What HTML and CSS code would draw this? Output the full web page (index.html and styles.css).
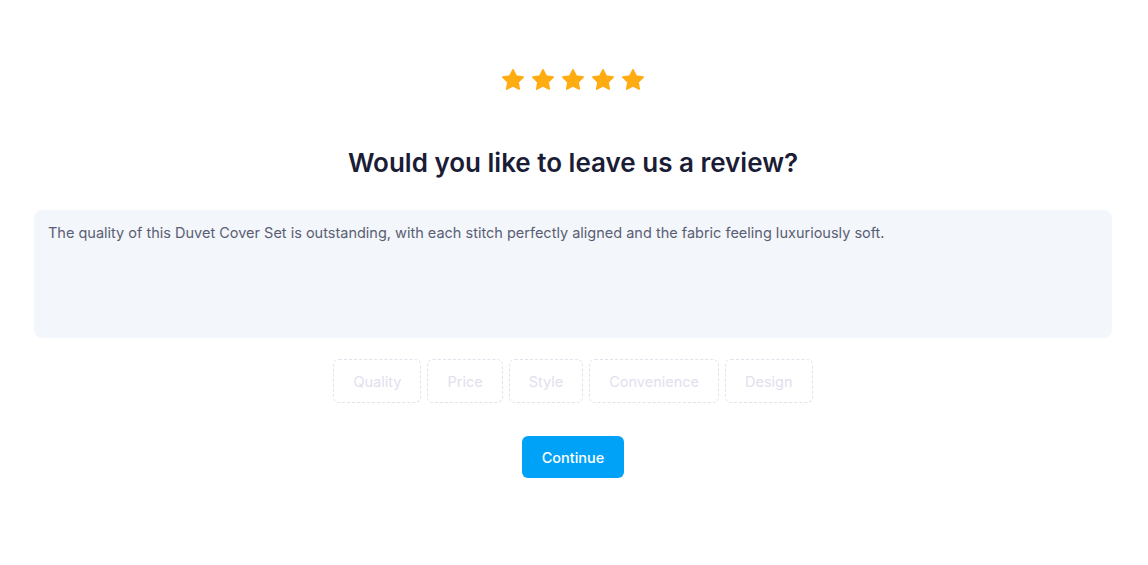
FILE: index.html
```html
<!DOCTYPE html>
<html>
<head>
    <link rel="stylesheet" href="styles.css">
</head>
<body>
    <div class="review-card">
        <div class="stars">
            <svg class="star" viewBox="0 0 24 24"><path d="M12 2.6l2.9 5.9 6.4.9-4.7 4.5 1.1 6.4-5.7-3-5.7 3 1.1-6.4-4.7-4.5 6.4-.9z"/></svg>
            <svg class="star" viewBox="0 0 24 24"><path d="M12 2.6l2.9 5.9 6.4.9-4.7 4.5 1.1 6.4-5.7-3-5.7 3 1.1-6.4-4.7-4.5 6.4-.9z"/></svg>
            <svg class="star" viewBox="0 0 24 24"><path d="M12 2.6l2.9 5.9 6.4.9-4.7 4.5 1.1 6.4-5.7-3-5.7 3 1.1-6.4-4.7-4.5 6.4-.9z"/></svg>
            <svg class="star" viewBox="0 0 24 24"><path d="M12 2.6l2.9 5.9 6.4.9-4.7 4.5 1.1 6.4-5.7-3-5.7 3 1.1-6.4-4.7-4.5 6.4-.9z"/></svg>
            <svg class="star" viewBox="0 0 24 24"><path d="M12 2.6l2.9 5.9 6.4.9-4.7 4.5 1.1 6.4-5.7-3-5.7 3 1.1-6.4-4.7-4.5 6.4-.9z"/></svg>
        </div>

        <h1 class="title">Would you like to leave us a review?</h1>

        <textarea class="review-text">The quality of this Duvet Cover Set is outstanding, with each stitch perfectly aligned and the fabric feeling luxuriously soft.</textarea>

        <div class="tags">
            <button class="tag">Quality</button>
            <button class="tag">Price</button>
            <button class="tag">Style</button>
            <button class="tag">Convenience</button>
            <button class="tag">Design</button>
        </div>

        <button class="continue-button">Continue</button>
    </div>
</body>
</html>
```

FILE: styles.css
```css
body {
    margin: 0;
    background: #ffffff;
    font-family: Inter, "Noto Sans", sans-serif;
}

.review-card {
    display: flex;
    flex-direction: column;
    align-items: center;
    padding: 67px 36px 0 34px;
}

.stars {
    display: flex;
    gap: 4px;
}

.star {
    width: 26px;
    height: 26px;
    fill: #ffab12;
    stroke: #ffab12;
    stroke-width: 1.6;
    stroke-linejoin: round;
}

.title {
    margin: 54px 0 0;
    font-size: 26px;
    line-height: 32px;
    font-weight: 600;
    color: #1a1d35;
}

.review-text {
    box-sizing: border-box;
    width: 100%;
    height: 128px;
    margin-top: 31px;
    padding: 13px 14px;
    border: none;
    border-radius: 8px;
    background: #f3f6fa;
    color: #5a5e74;
    font-family: inherit;
    font-size: 14.5px;
    line-height: 20px;
    resize: none;
    outline: none;
}

.tags {
    display: flex;
    gap: 6px;
    margin-top: 21px;
}

.tag {
    height: 44px;
    padding: 0 19px;
    border: 1px dashed #e1e3ec;
    border-radius: 6px;
    background: #ffffff;
    color: #dfe1ed;
    font-family: inherit;
    font-size: 14.5px;
    cursor: pointer;
}

.continue-button {
    margin-top: 33px;
    height: 42px;
    padding: 0 20px;
    border: none;
    border-radius: 6px;
    background: #00a2f8;
    color: #ffffff;
    font-family: inherit;
    font-size: 14.5px;
    font-weight: 500;
    cursor: pointer;
}
```
